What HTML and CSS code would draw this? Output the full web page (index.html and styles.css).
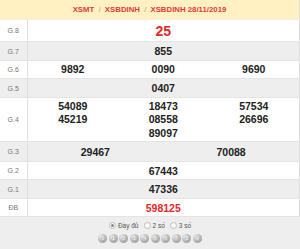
FILE: index.html
```html
<!DOCTYPE html>
<html>
<head>
<meta charset="utf-8">
<link rel="stylesheet" href="styles.css">
</head>
<body>
<table class="kq">
  <colgroup><col class="c-lbl"><col class="c-val"></colgroup>
  <tr class="head"><td colspan="2"><span class="red">XSMT</span> <span class="sl">/</span> <span class="red">XSBDINH</span> <span class="sl">/</span> <span class="red">XSBDINH 28/11/2019</span></td></tr>
  <tr class="r8"><td class="lbl">G.8</td><td class="val big">25</td></tr>
  <tr class="r7 alt"><td class="lbl">G.7</td><td class="val">855</td></tr>
  <tr class="r6"><td class="lbl">G.6</td><td><div class="cols3"><span>9892</span><span>0090</span><span>9690</span></div></td></tr>
  <tr class="r5 alt"><td class="lbl">G.5</td><td class="val">0407</td></tr>
  <tr class="r4"><td class="lbl">G.4</td><td><div class="cols3 top"><span>54089<br>45219</span><span>18473<br>08558<br>89097</span><span>57534<br>26696</span></div></td></tr>
  <tr class="r3 alt"><td class="lbl">G.3</td><td><div class="cols2"><span>29467</span><span>70088</span></div></td></tr>
  <tr class="r2"><td class="lbl">G.2</td><td class="val">67443</td></tr>
  <tr class="r1 alt"><td class="lbl">G.1</td><td class="val">47336</td></tr>
  <tr class="rdb"><td class="lbl">ĐB</td><td class="val db">598125</td></tr>
</table>
<div class="foot">
  <div class="opts">
    <label class="opt"><span class="radio on"></span>Đầy đủ</label>
    <label class="opt"><span class="radio"></span>2 số</label>
    <label class="opt"><span class="radio"></span>3 số</label>
  </div>
  <div class="balls">
    <span class="ball">0</span><span class="ball">1</span><span class="ball">2</span><span class="ball">3</span><span class="ball">4</span><span class="ball">5</span><span class="ball">6</span><span class="ball">7</span><span class="ball">8</span><span class="ball">9</span>
  </div>
</div>
</body>
</html>
```

FILE: styles.css
```css
html, body { margin: 0; padding: 0; background: #fff; }
body { width: 300px; height: 249px; overflow: hidden; font-family: "Liberation Sans", Arial, sans-serif; }
.kq { width: 300px; border-collapse: collapse; table-layout: fixed; }
.c-lbl { width: 27px; }
.kq td { padding: 0; border-bottom: 1px solid #e4e4e4; font-weight: bold; font-size: 10.5px; color: #222; text-align: center; }
.kq tr td:last-child { border-right: 1px solid #dcdcdc; }
.kq td.lbl { border-right: 1px solid #e0e0e0; font-weight: normal; font-size: 7px; color: #777; }
.head td { height: 19px; background: #fff1c2; font-size: 7.8px; border-bottom: 1px solid #eee; }
.head .red { color: #e43a3a; }
.head .sl { color: #a99; font-weight: normal; margin: 0 2px; }
.alt td { background: #eeeeee; }
.r8 td { height: 21px; }
.r7 td { height: 18px; }
.r6 td { height: 17px; }
.r5 td { height: 18px; }
.r4 td { height: 43px; }
.r3 td { height: 19px; }
.r2 td { height: 17px; }
.r1 td { height: 18px; }
.rdb td { height: 17px; }
.big { font-size: 14px !important; color: #e42828 !important; }
.db { color: #e42828 !important; }
.cols3 { display: grid; grid-template-columns: 1fr 1fr 1fr; line-height: 13.5px; }
.cols3.top { align-items: start; padding-top: 1px; }
.cols2 { display: grid; grid-template-columns: 1fr 1fr; }
.foot { background: #eeeeee; height: 32px; display: flex; flex-direction: column; align-items: center; padding-top: 4px; box-sizing: border-box; }
.opts { display: flex; gap: 5px; font-size: 6.5px; color: #555; line-height: 9px; height: 9px; }
.opt { display: flex; align-items: center; gap: 2px; }
.radio { width: 5px; height: 5px; border-radius: 50%; border: 1px solid #bbb; background: #fafafa; display: inline-block; position: relative; }
.radio.on::after { content: ""; position: absolute; left: 1px; top: 1px; width: 3px; height: 3px; border-radius: 50%; background: #888; }
.balls { display: flex; gap: 1.5px; margin-top: 4px; }
.ball { width: 9px; height: 9px; border-radius: 50%; background: radial-gradient(circle at 35% 30%, #f2f2f2 0%, #bdbdbd 45%, #8a8a8a 100%); color: #fff; font-size: 5.5px; line-height: 9px; text-align: center; font-weight: bold; text-shadow: 0 0 1px #555; }
```
